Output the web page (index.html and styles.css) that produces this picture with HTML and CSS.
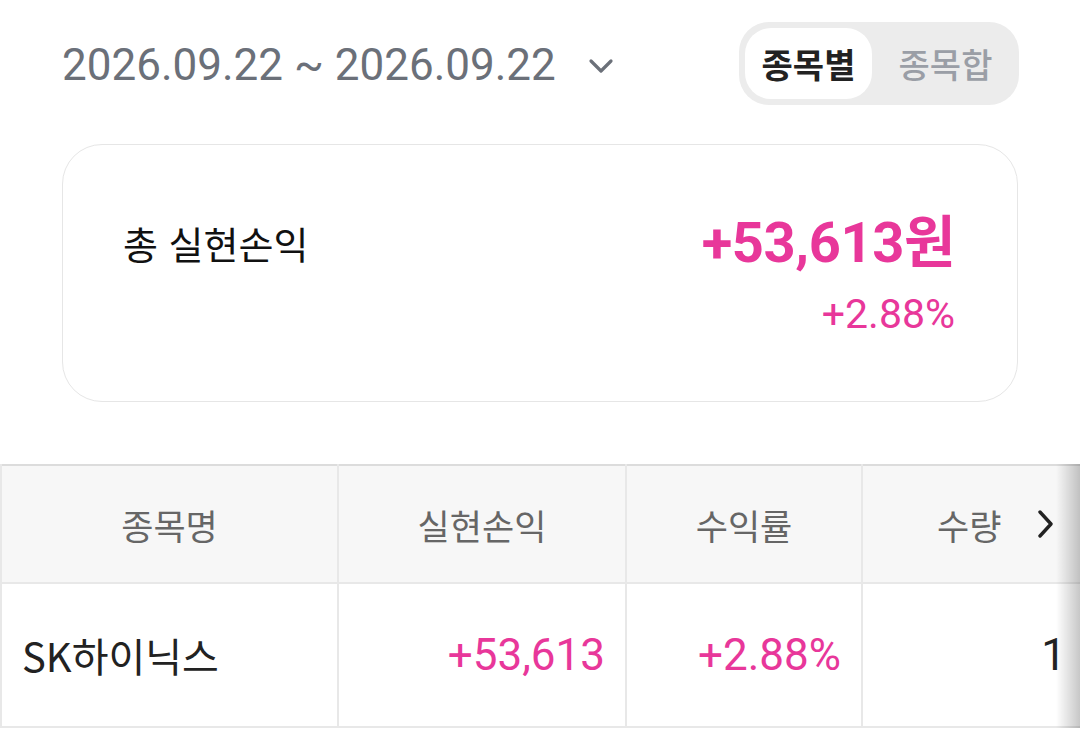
FILE: index.html
```html
<!DOCTYPE html>
<html lang="ko">
<head>
    <meta charset="UTF-8">
    <meta name="viewport" content="width=device-width, initial-scale=1.0">
    <title>실현손익</title>
    <link rel="stylesheet" href="styles.css">
</head>
<body>
    <div class="top">
        <div class="period">
            <span>2026.09.22 ~ 2026.09.22</span>
            <svg class="caret" width="26" height="16" viewBox="0 0 26 16"><path d="M3 3l10 10 10-10" fill="none" stroke="#6b7079" stroke-width="3.2" stroke-linecap="round" stroke-linejoin="round"/></svg>
        </div>
        <div class="toggle">
            <button class="tab active">종목별</button>
            <button class="tab">종목합</button>
        </div>
    </div>

    <div class="card">
        <div class="card-label">총 실현손익</div>
        <div class="card-values">
            <div class="total">+53,613원</div>
            <div class="rate">+2.88%</div>
        </div>
    </div>

    <div class="table-wrap">
        <table class="result">
            <colgroup>
                <col style="width: 337px">
                <col style="width: 288px">
                <col style="width: 236px">
                <col style="width: 221px">
            </colgroup>
            <thead>
                <tr>
                    <th>종목명</th>
                    <th>실현손익</th>
                    <th>수익률</th>
                    <th class="qty">수량</th>
                </tr>
            </thead>
            <tbody>
                <tr>
                    <td class="name">SK하이닉스</td>
                    <td class="up">+53,613</td>
                    <td class="up">+2.88%</td>
                    <td class="qty-val">1</td>
                </tr>
            </tbody>
        </table>
        <svg class="more" width="18" height="28" viewBox="0 0 18 28"><path d="M3 2l11 12-11 12" fill="none" stroke="#222" stroke-width="3.4" stroke-linecap="round" stroke-linejoin="round"/></svg>
        <div class="fade"></div>
    </div>
</body>
</html>
```

FILE: styles.css
```css
body {
    margin: 0;
    background: #fff;
    font-family: Roboto, "Noto Sans CJK KR", sans-serif;
    color: #222;
    width: 1080px;
    overflow: hidden;
}
.top {
    display: flex;
    justify-content: space-between;
    align-items: center;
    padding: 22px 61px 0 62px;
}
.period {
    display: flex;
    align-items: center;
    gap: 32px;
    font-size: 44px;
    color: #6b7079;
    padding-top: 2px;
}
.caret {
    margin-top: 2px;
}
.toggle {
    display: flex;
    background: #ececec;
    border-radius: 30px;
    padding: 6px;
    width: 268px;
    height: 71px;
}
.tab {
    border: none;
    background: transparent;
    font-family: "Noto Sans CJK KR", sans-serif;
    font-size: 34px;
    font-weight: 500;
    color: #9a9ea6;
    width: 135px;
    border-radius: 26px;
    padding: 0;
}
.tab.active {
    background: #fff;
    color: #222;
    font-weight: 700;
    width: 127px;
    margin-right: 6px;
}
.card {
    margin: 39px 62px 0 62px;
    height: 256px;
    border: 1px solid #e6e6e6;
    border-radius: 40px;
    display: flex;
    justify-content: space-between;
    align-items: flex-start;
    padding: 0 62px 0 60px;
}
.card-label {
    font-family: "Noto Sans CJK KR", sans-serif;
    font-size: 38px;
    color: #111;
    margin-top: 70px;
}
.card-values {
    text-align: right;
    margin-top: 64px;
}
.total {
    font-size: 56px;
    font-weight: 700;
    color: #e8379a;
    line-height: 68px;
    letter-spacing: -0.4px;
}
.rate {
    font-size: 41px;
    color: #e8379a;
    line-height: 48px;
    margin-top: 13px;
}
.table-wrap {
    position: relative;
    margin-top: 62px;
    overflow: hidden;
    width: 1080px;
}
.result {
    border-collapse: collapse;
    width: 1082px;
    table-layout: fixed;
    border-top: 2px solid #dcdcdc;
}
.result th {
    background: #f7f7f7;
    height: 116px;
    font-family: "Noto Sans CJK KR", sans-serif;
    font-size: 35px;
    font-weight: 400;
    color: #666;
    text-align: center;
    border: 2px solid #e8e8e8;
    border-top: none;
    padding: 0;
}
.result th.qty {
    text-align: left;
    padding-left: 74px;
}
.result td {
    height: 142px;
    font-size: 44px;
    color: #222;
    text-align: right;
    padding: 0 20px;
    border: 2px solid #e8e8e8;
}
.result td.qty-val {
    padding-right: 16px;
}
.result td.name {
    text-align: left;
    font-family: "Noto Sans CJK KR", sans-serif;
    font-size: 40px;
    color: #222;
}
.result .up {
    color: #e8379a;
}
.more {
    position: absolute;
    right: 25px;
    top: 46px;
}
.fade {
    position: absolute;
    top: 0;
    right: 0;
    width: 24px;
    height: 100%;
    background: linear-gradient(to right, rgba(0, 0, 0, 0), rgba(0, 0, 0, 0.22));
}
```
